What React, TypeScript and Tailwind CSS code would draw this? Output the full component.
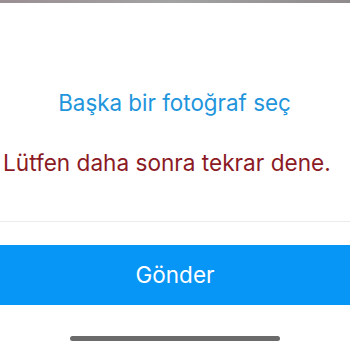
export default function App() {
  return (
    <div className="w-[350px] h-[350px] bg-white flex flex-col overflow-hidden" style={{ fontFamily: 'Inter, "Noto Sans", sans-serif' }}>
      <div className="h-[3px] bg-gradient-to-r from-[#9a8f93] via-[#a3a3a3] to-[#8f8a8c]" />
      <div className="h-[86px]" />
      <div className="text-center text-[22.4px] leading-[28px] text-[#1f95dc] whitespace-nowrap pr-[1px]">Başka bir fotoğraf seç</div>
      <div className="h-[31px]" />
      <div className="pl-[3px] text-left text-[22.6px] leading-[30px] text-[#8b1a25] whitespace-nowrap">Lütfen daha sonra tekrar dene.</div>
      <div className="h-[43px]" />
      <div className="h-px bg-[#ececec]" />
      <div className="h-[23px]" />
      <div className="h-[60px] bg-[#0795f6] flex items-center justify-center text-white text-[22.5px]">Gönder</div>
      <div className="flex-1 flex items-start justify-center pt-[31px]">
        <div className="w-[210px] h-[5px] rounded-full bg-[#6b6b6b]" />
      </div>
    </div>
  );
}
